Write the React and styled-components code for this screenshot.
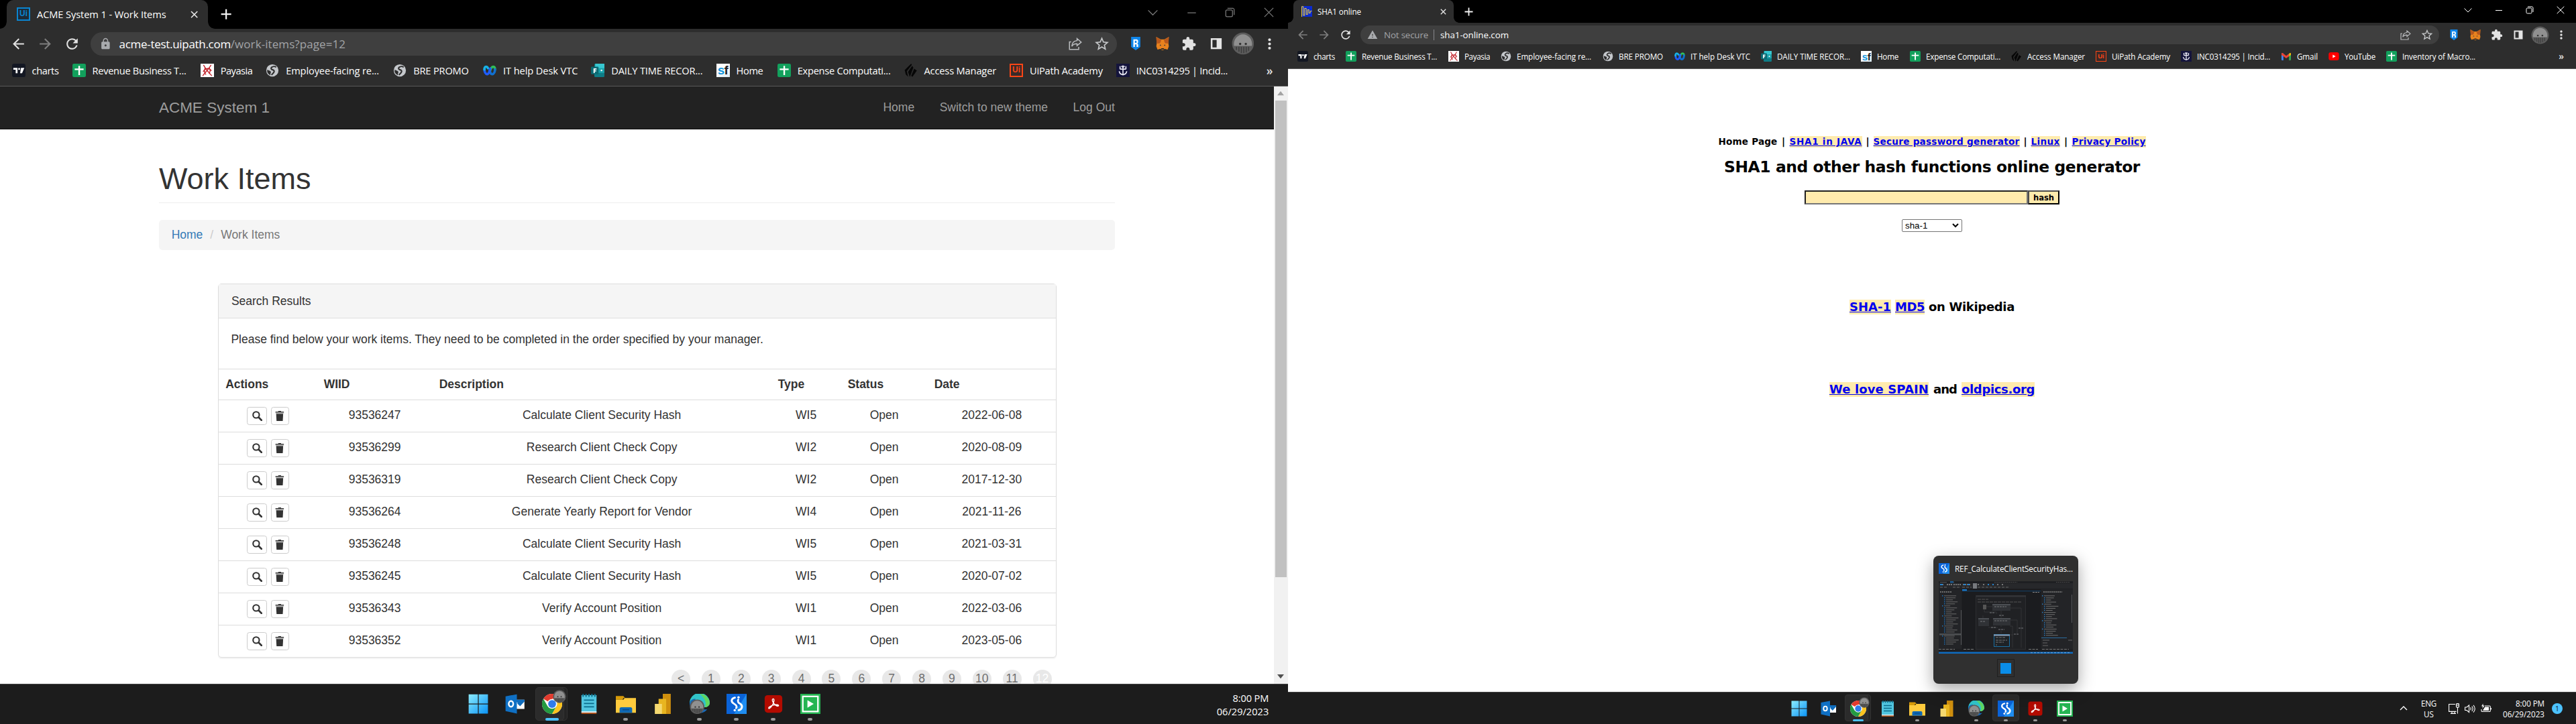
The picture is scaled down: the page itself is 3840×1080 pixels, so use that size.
import React from "react";
import styled, { createGlobalStyle } from "styled-components";
import {
  MdArrowBack, MdArrowForward, MdRefresh, MdLock, MdStarOutline,
  MdExtension, MdMoreVert, MdWarning,
} from "react-icons/md";

const UI = '"Open Sans", "Noto Sans", sans-serif';
const ARIAL = '"Liberation Sans", Arial, sans-serif';
const VERDANA = '"DejaVu Sans", Verdana, sans-serif';

const Global = createGlobalStyle`
  * { box-sizing: border-box; }
  body { margin: 0; background: #fff; overflow: hidden; }
  svg { display: block; flex: none; }
`;

/* ---------- text with a measured tracking ---------- */

const pen = document.createElement("canvas").getContext("2d");

function tracking(text, width, size, weight, font) {
  pen.font = `${weight} ${size}px ${font}`;
  return (width - pen.measureText(text).width) / text.length;
}

const LabelText = styled.span`
  display: block;
  flex: none;
  width: ${(p) => p.$w}px;
  font: ${(p) => p.$weight} ${(p) => p.$size}px ${(p) => p.$font};
  line-height: ${(p) => p.$line};
  color: ${(p) => p.$color};
  white-space: nowrap;
`;

const MarkText = styled(LabelText)`
  background: #ffebad;
  text-decoration: underline;
`;

function Label({ w, size = 11.7, weight = 400, font = UI, color = "#fff", line = "16px", marked, children }) {
  const Text = marked ? MarkText : LabelText;
  return (
    <Text
      $w={w} $size={size} $weight={weight} $font={font} $color={color} $line={line}
      style={{ letterSpacing: `${tracking(children, w, size, weight, font)}px` }}
    >
      {children}
    </Text>
  );
}

/* ---------- desktop ---------- */

const Desktop = styled.div`
  display: flex;
  width: 3840px;
  height: 1080px;
  overflow: hidden;
`;

const Screen = styled.section`
  position: relative;
  display: flex;
  flex-direction: column;
  flex: none;
  zoom: ${(p) => p.$scale};
  width: ${(p) => 1920 / p.$scale}px;
  height: ${(p) => 1080 / p.$scale}px;
  background: #fff;
  overflow: hidden;
`;

/* ---------- browser frame ---------- */

const TabStrip = styled.div`
  display: flex;
  height: 34px;
  flex: none;
  background: #000;
  padding-left: 8px;
`;

const Tab = styled.div`
  position: relative;
  display: flex;
  align-items: center;
  width: ${(p) => p.$w}px;
  height: 34px;
  padding: 0 9px 0 12px;
  gap: 8px;
  border-radius: 8px 8px 0 0;
  background: #2d2d2d;
  &::before, &::after {
    content: "";
    position: absolute;
    bottom: 0;
    width: 8px;
    height: 8px;
  }
  &::before { left: -8px; background: radial-gradient(circle at 0 0, transparent 7.5px, #2d2d2d 8px); }
  &::after { right: -8px; background: radial-gradient(circle at 100% 0, transparent 7.5px, #2d2d2d 8px); }
`;

const Push = styled.div` flex: 1; `;

const StripButton = styled.div`
  display: flex;
  align-items: center;
  justify-content: center;
  width: ${(p) => p.$w}px;
  height: ${(p) => p.$h}px;
`;

const Toolbar = styled.div`
  display: flex;
  flex: none;
  height: 32px;
  padding: 4px 6px 0;
  background: #2d2d2d;
`;

const ToolButton = styled.div`
  display: flex;
  align-items: center;
  justify-content: center;
  width: 32px;
  height: 28px;
  color: ${(p) => p.$color || "#e2e2e2"};
`;

const Omnibox = styled.div`
  display: flex;
  align-items: center;
  flex: 1;
  height: 28px;
  margin: 0 6px;
  padding: 0 2px 0 10px;
  border-radius: 14px;
  background: #3f3f3f;
  color: #a9abae;
`;

const SiteIcon = styled.div` width: ${(p) => p.$w}px; display: flex; align-items: center; `;
const Divider = styled.div` width: 1px; height: 16px; margin: 0 9px 0 8px; background: #87898c; `;

const Bookmarks = styled.div`
  display: flex;
  align-items: center;
  flex: none;
  height: 37px;
  padding: 0 ${(p) => p.$end}px 0 14px;
  background: #2d2d2d;
  border-bottom: 1px solid #5a5a5a;
`;

const Bookmark = styled.div`
  display: flex;
  align-items: center;
  gap: 8px;
  margin-right: 16px;
`;

const More = styled.div`
  margin-left: auto;
  font: 600 14px ${UI};
  line-height: 16px;
  color: #e0e0e0;
`;

const Tile = styled.span`
  display: flex;
  align-items: center;
  justify-content: center;
  flex: none;
  width: 16px;
  height: 16px;
  background: ${(p) => p.$bg};
  border: ${(p) => p.$border || "0"};
  color: ${(p) => p.$color};
  font: ${(p) => p.$font};
  line-height: 1;
  letter-spacing: ${(p) => p.$track || 0};
`;

const G = (props) => <svg width="16" height="16" viewBox="0 0 16 16" {...props} />;

const UiTile = ({ color, bg }) => (
  <Tile $bg={bg} $color={color} $border={`1.6px solid ${color}`} $font={`700 9.5px ${ARIAL}`}>Ui</Tile>
);
const Charts = () => (
  <G><rect width="16" height="16" rx="2.5" fill="#131722" />
    <path d="M1.5 5h5v6.3H4.3V7.2H1.5zM10.6 5h4l-2.7 6.3H9.6z" fill="#fff" /><circle cx="8.4" cy="6.2" r="1.2" fill="#fff" /></G>
);
const Sheets = () => (
  <G><rect width="16" height="16" rx="1.8" fill="#12a05c" />
    <path d="M7.1 2.5h1.9v3.2h4.3v1.9H9v6H7.1v-6H2.7V5.7h4.4z" fill="#fff" /></G>
);
const Payasia = () => (
  <G><rect width="16" height="16" fill="#fff" />
    <path d="M3.5 1.5c2 4 6 9 10 13M12.5 1.5C10 6 6 10 2.5 14.5M3 9.5c3-4.5 7-5 10-1M5.5 5c-1.5 3-1 6 1 8M10.5 5c1.5 3 1 5-.5 7" stroke="#c3252c" strokeWidth="1.1" fill="none" /></G>
);
const Globe = () => (
  <G><circle cx="8" cy="8" r="7.3" fill="#c4c7cb" />
    <path d="M12.6 4.2C11 3 8.600 3.200 7.200 4.300 5.600 5.600 7 7 8.300 7.300c1.700.4 2.300 1.500 1.500 2.900-.6 1.200-1.700 1.700-2.800 3.300" stroke="#2d2d2d" strokeWidth="1.7" fill="none" />
    <path d="M1.800 7.200l3.400 1.300c1.300.6 1.300 1.700.8 2.600-.4.800-.2 1.700-.3 2.600A6.300 6.300 0 0 1 1.800 7.200z" fill="#2d2d2d" /></G>
);
const Webex = () => (
  <G fill="none" strokeLinecap="round" strokeWidth="2.9">
    <path d="M8 10.200c.9-4 2.200-6.600 4.300-6.600 1.500 0 2.100 1.700 2 3.600" stroke="#2fbf5a" />
    <path d="M14.300 6.800c-.1 3-1.300 5.700-3.300 5.700-1.900 0-2.700-2.300-3.200-4.500" stroke="#1170cf" />
    <path d="M1.700 6.800c.1 3 1.300 5.700 3.300 5.700 2.400 0 2.900-4.300 3.700-6.700" stroke="#1e5cff" />
    <path d="M1.700 7c-.1-1.900.5-3.400 2-3.400 1 0 1.700.8 2.200 1.800" stroke="#17b2e6" />
  </G>
);
const Forms = () => (
  <G><rect x="4" width="12" height="16" rx="1.2" fill="#0e7c86" /><rect x="5" width="11" height="5.5" fill="#38c7d0" />
    <rect x="8" y="5.5" width="8" height="5.5" fill="#1ba3ac" /><rect y="3.6" width="9" height="9" rx="1" fill="#0b6a73" />
    <path d="M3 5.600h3.600v1.300H4.500v1h1.800v1.200H4.500v2H3z" fill="#fff" /><circle cx="12.5" cy="8" r="1" fill="#fff" /></G>
);
const SfF = styled.i` color: #222; font-style: normal; `;
const Sf = () => (
  <Tile $bg="linear-gradient(160deg,#fff 55%,#d9e8f2)" $color="#1496dd" $font={`700 15px ${ARIAL}`} $track="-0.5px">
    s<SfF>f</SfF>
  </Tile>
);
const Access = () => (
  <G fill="#060606"><path d="M8.200 0L9 1.300 3 9l1.500 6.500L1.800 12.800.5 7.600z" /><path d="M9.400 2.600L10.800 4.500 6.600 15.800 4.500 9.800z" /><path d="M11.800 6L15 8.200l-5.200 7.300-1.600-1z" /></G>
);
const Incident = () => (
  <G><rect width="16" height="16" fill="#14143c" />
    <path d="M8 2v12M4.500 3v3.500M11.500 3v3.500M6 2.800L8 4.500l2-1.700M4.500 6.500h7M3.500 9c.5 3 2.500 4 4.500 4s4-1 4.500-4" stroke="#e8e8f4" strokeWidth="1.3" fill="none" /></G>
);
const Gmail = () => (
  <G><path d="M1 3.500h2.800V14H2a1 1 0 0 1-1-1z" fill="#4285f4" /><path d="M12.200 3.500H15V13a1 1 0 0 1-1 1h-1.800z" fill="#34a853" />
    <path d="M12.200 4.500l1.300-1.400c.8-.5 1.500 0 1.500 1v2L12.200 8z" fill="#fbbc04" /><path d="M1 6.100v-2c0-1 .8-1.500 1.600-1L8 7.200l4.200-3.100V8L8 11 3.800 8z" fill="#ea4335" /></G>
);
const YouTube = () => (
  <G><rect x=".3" y="2" width="15.4" height="12" rx="3.2" fill="#f00" /><path d="M6.300 5.500v5l4.400-2.500z" fill="#fff" /></G>
);
const WaveIcon = () => (
  <G><rect width="16" height="16" fill="#0b2bd0" />
    <path d="M.5 16V.8h2.300V14h2V3.500h2.400V12.500h2V5.500h2V10.500h2V7.500h2.300" stroke="#f2cf3a" strokeWidth="1" fill="none" /></G>
);

const BOOKMARKS = [
  [Charts, "charts", 32, 32],
  [Sheets, "Revenue Business T...", 112, 113],
  [Payasia, "Payasia", 38, 38],
  [Globe, "Employee-facing re...", 111, 112],
  [Globe, "BRE PROMO", 66, 67],
  [Webex, "IT help Desk VTC", 89, 89],
  [Forms, "DAILY TIME RECOR...", 109, 109],
  [Sf, "Home", 32, 33],
  [Sheets, "Expense Computati...", 111, 111],
  [Access, "Access Manager", 86, 86],
  [() => <UiTile color="#fa4616" bg="#3a2a28" />, "UiPath Academy", 87, 87],
  [Incident, "INC0314295 | Incid...", 109, 109],
  [Gmail, "Gmail", 31, 31],
  [YouTube, "YouTube", 46, 46],
  [Sheets, "Inventory of Macro...", 109, 109],
];

const Share = () => (
  <G fill="none" stroke="currentColor" strokeWidth="1.2"><path d="M3 6H1v9h11v-3" /><path d="M10 2l5 4.300-5 4.200V8.200C7 8.200 5 9 3.800 11.300 4 7.500 6.200 4.800 10 4.500z" /></G>
);
const Shield = () => (
  <G><path d="M2.500 0h11v12L8 16l-5.500-4z" fill="#0f85e8" /><path d="M5.200 3h4.300l1.300 1.200v2.600L9.900 7.900l1 1.200V12H9V8.900H7V12H5.200zM7 4.600v2.600h2V4.600z" fill="#fff" fillRule="evenodd" /></G>
);
const Fox = () => (
  <G><path d="M.5 0l5.300 3h4.400l5.300-3-.5 8 .5 3.200-1.500 4-3.700-1L9 15.800H7l-1.300-1.600-3.700 1-1.500-4L1 8z" fill="#e8821e" />
    <path d="M.5 0l6 4L5 7.500 1 8zM15.500 0l-6 4L11 7.500l4 .5z" fill="#b8581c" /><path d="M5 9l1.500 1.300-1.800.3zM11 9l-1.500 1.300 1.800.3z" fill="#233447" /><path d="M6.500 13.500h3l.3 1.500H6.200z" fill="#222" /></G>
);
const Panel = () => (
  <G><path d="M1.500 1.500h13v13h-13zM3.500 3.500v9h5v-9z" fill="#e4e4e4" fillRule="evenodd" /></G>
);
const Avatar = ({ size = 27 }) => (
  <svg width={size} height={size} viewBox="0 0 28 28">
    <circle cx="14" cy="14" r="13.5" fill="#5c5c5c" /><path d="M3 17a11.200 12 0 1 1 22 0z" fill="#909090" />
    <circle cx="10.5" cy="14.5" r="1.4" fill="#333" /><circle cx="17.5" cy="14.5" r="1.4" fill="#333" />
    <path d="M6 18v4M9 18v6M12 18v8M15 18v8M18 18v7M21 18v5" stroke="#3c3c3c" strokeWidth="1.2" />
  </svg>
);

function WindowControls({ color }) {
  const s = { width: 12, height: 12, viewBox: "0 0 12 12", fill: "none", stroke: color, strokeWidth: 1 };
  return (
    <>
      <StripButton $w={46} $h={29}><svg {...s}><path d="M.5 3.500L6 9l5.500-5.500" /></svg></StripButton>
      <StripButton $w={46} $h={29}><svg {...s}><path d="M1 6.500h10" /></svg></StripButton>
      <StripButton $w={46} $h={29}><svg {...s}><rect x="1" y="3" width="8" height="8" rx="1.5" /><path d="M3 1h6.500A1.800 1.800 0 0 1 11 2.800V9" /></svg></StripButton>
      <StripButton $w={46} $h={29}><svg {...s}><path d="M.7.7l10.600 10.600M11.300.7L.7 11.300" /></svg></StripButton>
    </>
  );
}

function Browser({ tabWidth, favicon, title, titleWidth, controls, back, count, end, children }) {
  return (
    <>
      <TabStrip>
        <Tab $w={tabWidth}>
          {favicon}
          <Label w={titleWidth}>{title}</Label>
          <Push />
          <StripButton $w={14} $h={34}>
            <svg width="9" height="9" viewBox="0 0 9 9" stroke="#e8e8e8" strokeWidth="1.3"><path d="M.8.8l7.400 7.400M8.200.8L.8 8.200" /></svg>
          </StripButton>
        </Tab>
        <StripButton $w={44} $h={34}>
          <svg width="13" height="13" viewBox="0 0 13 13" stroke="#f2f2f2" strokeWidth="1.8"><path d="M6.500.5v12M.5 6.500h12" /></svg>
        </StripButton>
        <Push />
        <WindowControls color={controls} />
      </TabStrip>
      <Toolbar>
        <ToolButton $color={back}><MdArrowBack size={20} /></ToolButton>
        <ToolButton $color="#7e7e7e"><MdArrowForward size={20} /></ToolButton>
        <ToolButton><MdRefresh size={20} /></ToolButton>
        <Omnibox>
          {children}
          <Push />
          <ToolButton $color="#b9bbbe"><Share /></ToolButton>
          <ToolButton $color="#c6c8ca"><MdStarOutline size={20} /></ToolButton>
        </Omnibox>
        <ToolButton><Shield /></ToolButton>
        <ToolButton><Fox /></ToolButton>
        <ToolButton><MdExtension size={18} /></ToolButton>
        <ToolButton><Panel /></ToolButton>
        <ToolButton><Avatar /></ToolButton>
        <ToolButton><MdMoreVert size={20} /></ToolButton>
      </Toolbar>
      <Bookmarks $end={end}>
        {BOOKMARKS.slice(0, count).map(([Icon, text, w, box], i) => (
          <Bookmark key={i} style={{ width: box + 24 }}><Icon /><Label w={w}>{text}</Label></Bookmark>
        ))}
        <More>»</More>
      </Bookmarks>
    </>
  );
}

/* ---------- ACME page ---------- */

const Viewport = styled.div`
  display: flex;
  flex: 1;
  min-height: 0;
  overflow: hidden;
`;

const AcmePage = styled.main`
  flex: 1;
  display: flex;
  flex-direction: column;
  align-items: center;
  overflow: hidden;
  font: 14px/20px ${ARIAL};
  color: #333;
`;

const NavBar = styled.nav`
  display: flex;
  flex: none;
  align-items: center;
  justify-content: space-between;
  width: 100%;
  height: 51px;
  padding: 0 189.5px;
  background: #222;
  border-bottom: 1px solid #080808;
  color: #9d9d9d;
`;
const Brand = styled.div` font-size: 18px; `;
const NavLinks = styled.div` display: flex; gap: 30px; `;

const Container = styled.div` flex: none; width: 1140px; `;
const Heading = styled.h1`
  margin: 39.4px 0 20px;
  padding-bottom: 8.6px;
  border-bottom: 1px solid #eee;
  font: 36px/39.6px ${ARIAL};
`;
const Crumbs = styled.div`
  display: flex;
  height: 36px;
  padding: 8px 15px;
  border-radius: 4px;
  background: #f5f5f5;
  color: #777;
`;
const CrumbLink = styled.a` color: #337ab7; `;
const Slash = styled.span` padding: 0 8.8px; color: #ccc; `;

const PanelBox = styled.section`
  width: 1000px;
  margin: 40px auto 0 70.6px;
  border: 1px solid #ddd;
  border-radius: 4px;
  box-shadow: 0 1px 1px rgba(0, 0, 0, 0.05);
`;
const PanelHead = styled.header`
  height: 40.8px;
  padding: 10px 15px;
  background: #f5f5f5;
  border-bottom: 1px solid #ddd;
`;
const PanelText = styled.p` margin: 0; height: 60px; padding: 15px 14.6px; `;

const Row = styled.div`
  display: grid;
  grid-template-columns: 117.2px 137.6px 404px 83.2px 103.2px 1fr;
  height: ${(p) => (p.$head ? 36.8 : 38.4)}px;
  border-top: 1px solid #ddd;
  font-weight: ${(p) => (p.$head ? 700 : 400)};
  text-align: ${(p) => (p.$head ? "left" : "center")};
`;
const Cell = styled.div` padding: 7.8px 8px; `;
const Actions = styled.div`
  display: flex;
  justify-content: center;
  gap: 4.4px;
  padding-top: 7.8px;
`;
const IconButton = styled.button`
  display: flex;
  align-items: center;
  justify-content: center;
  width: ${(p) => p.$w}px;
  height: 21.8px;
  padding: 0;
  background: #fff;
  border: 1px solid #ccc;
  border-radius: 3px;
`;

const Pager = styled.div`
  display: flex;
  justify-content: flex-end;
  gap: 13.5px;
  width: 1000px;
  margin: 14.6px 0 0 70px;
  padding-right: 5.5px;
`;
const PageDot = styled.span`
  display: flex;
  justify-content: center;
  width: 22.4px;
  height: 22.4px;
  border-radius: 50%;
  background: #e8e8e8;
  color: ${(p) => (p.$on ? "#fff" : "#6f6f6f")};
  line-height: 22px;
  white-space: nowrap;
`;

const ScrollTrack = styled.div`
  display: flex;
  flex-direction: column;
  align-items: center;
  justify-content: space-between;
  width: 17px;
  background: #f1f1f1;
`;
const ScrollThumb = styled.div`
  width: 13.6px;
  height: 568.8px;
  margin-bottom: auto;
  background: #c1c1c1;
`;
const ScrollArrow = styled.div`
  display: flex;
  align-items: center;
  justify-content: center;
  width: 17px;
  height: 17px;
`;

const ITEMS = [
  ["93536247", "Calculate Client Security Hash", "WI5", "2022-06-08"],
  ["93536299", "Research Client Check Copy", "WI2", "2020-08-09"],
  ["93536319", "Research Client Check Copy", "WI2", "2017-12-30"],
  ["93536264", "Generate Yearly Report for Vendor", "WI4", "2021-11-26"],
  ["93536248", "Calculate Client Security Hash", "WI5", "2021-03-31"],
  ["93536245", "Calculate Client Security Hash", "WI5", "2020-07-02"],
  ["93536343", "Verify Account Position", "WI1", "2022-03-06"],
  ["93536352", "Verify Account Position", "WI1", "2023-05-06"],
];

const SearchGlyph = () => (
  <svg width="12" height="12" viewBox="0 0 12 12" fill="none" stroke="#333"><circle cx="4.7" cy="4.7" r="3.7" strokeWidth="1.7" /><path d="M7.600 7.600l3.400 3.400" strokeWidth="2.1" strokeLinecap="round" /></svg>
);
const TrashGlyph = () => (
  <svg width="11" height="12" viewBox="0 0 11 12" fill="#333"><path d="M3.800 0h3.400v.8H10.500v1.200H.5V.8h3.300z" /><path d="M.8 2.200h9.400v1H.8z" fill="#aaa" /><path d="M1.300 3.400h8.400L9.200 12H1.800z" /></svg>
);

function Acme() {
  return (
    <Viewport>
      <AcmePage>
        <NavBar>
          <Brand>ACME System 1</Brand>
          <NavLinks><span>Home</span><span>Switch to new theme</span><span>Log Out</span></NavLinks>
        </NavBar>
        <Container>
          <Heading>Work Items</Heading>
          <Crumbs><CrumbLink>Home</CrumbLink><Slash>/</Slash><span>Work Items</span></Crumbs>
          <PanelBox>
            <PanelHead>Search Results</PanelHead>
            <PanelText>Please find below your work items. They need to be completed in the order specified by your manager.</PanelText>
            <Row $head>
              {["Actions", "WIID", "Description", "Type", "Status", "Date"].map((h) => <Cell key={h}>{h}</Cell>)}
            </Row>
            {ITEMS.map(([id, text, type, date]) => (
              <Row key={id}>
                <Actions>
                  <IconButton $w={24}><SearchGlyph /></IconButton>
                  <IconButton $w={21.6}><TrashGlyph /></IconButton>
                </Actions>
                <Cell>{id}</Cell><Cell>{text}</Cell><Cell>{type}</Cell><Cell>Open</Cell><Cell>{date}</Cell>
              </Row>
            ))}
          </PanelBox>
          <Pager>
            {["<", 1, 2, 3, 4, 5, 6, 7, 8, 9, 10, 11, 12].map((n) => <PageDot key={n} $on={n === 12}>{n}</PageDot>)}
          </Pager>
        </Container>
      </AcmePage>
      <ScrollTrack>
        <ScrollArrow><svg width="8" height="5" viewBox="0 0 8 5"><path d="M0 5l4-5 4 5z" fill="#a3a3a3" /></svg></ScrollArrow>
        <ScrollThumb />
        <ScrollArrow><svg width="8" height="5" viewBox="0 0 8 5"><path d="M0 0l4 5 4-5z" fill="#505050" /></svg></ScrollArrow>
      </ScrollTrack>
    </Viewport>
  );
}

/* ---------- hash generator page ---------- */

const HashPage = styled.main`
  display: flex;
  flex: 1;
  flex-direction: column;
  align-items: center;
  padding-top: 100px;
`;
const Line = styled.div`
  display: flex;
  gap: ${(p) => p.$gap || 0}px;
  margin-top: ${(p) => p.$top || 0}px;
`;
const Bar = styled.span`
  width: ${(p) => p.$w || 18}px;
  text-align: center;
  font: 700 14px/17px ${VERDANA};
`;
const HashInput = styled.div`
  width: 333px;
  height: 21px;
  border: 2px solid;
  border-color: #202020 #767676 #767676 #202020;
  background: #ffebad;
`;
const HashButton = styled.div`
  display: flex;
  align-items: center;
  justify-content: center;
  width: 47px;
  height: 21px;
  border: 2px solid;
  border-color: #4c4c4c #000 #000 #4c4c4c;
  background: #ffebad;
`;
const Select = styled.div`
  display: flex;
  align-items: center;
  justify-content: space-between;
  width: 90px;
  height: 19px;
  margin-top: 22px;
  padding: 0 4px;
  border: 1px solid #767676;
  border-radius: 2px;
  font: 13.333px ${ARIAL};
  color: #000;
`;

const bold = { font: VERDANA, weight: 700, color: "#000" };
const link = { ...bold, marked: true, color: "#0000ee" };

function HashSite() {
  const nav = { size: 13.6, line: "17px" };
  const big = { size: 18, line: "22px" };
  return (
    <HashPage>
      <Line>
        <Label w={88} {...bold} {...nav}>Home Page</Label><Bar>|</Bar>
        <Label w={108} {...link} {...nav}>SHA1 in JAVA</Label><Bar $w={17}>|</Bar>
        <Label w={218} {...link} {...nav}>Secure password generator</Label><Bar $w={17}>|</Bar>
        <Label w={43} {...link} {...nav}>Linux</Label><Bar>|</Bar>
        <Label w={110} {...link} {...nav}>Privacy Policy</Label>
      </Line>
      <Line $top={15}><Label w={620} {...bold} size={23.4} line="28px">SHA1 and other hash functions online generator</Label></Line>
      <Line $top={21}>
        <HashInput />
        <HashButton><Label w={31} {...bold} size={11.6}>hash</Label></HashButton>
      </Line>
      <Select>
        sha-1
        <svg width="10" height="7" viewBox="0 0 10 7" fill="none" stroke="#000" strokeWidth="2"><path d="M1 1l4 4 4-4" /></svg>
      </Select>
      <Line $top={101} $gap={6}>
        <Label w={62} {...link} {...big}>SHA-1</Label>
        <Label w={44} {...link} {...big}>MD5</Label>
        <Label w={128} {...bold} {...big}>on Wikipedia</Label>
      </Line>
      <Line $top={101} $gap={7}>
        <Label w={148} {...link} {...big}>We love SPAIN</Label>
        <Label w={35} {...bold} {...big}>and</Label>
        <Label w={109} {...link} {...big}>oldpics.org</Label>
      </Line>
    </HashPage>
  );
}

/* ---------- taskbar ---------- */

const Taskbar = styled.footer`
  display: grid;
  grid-template-columns: 1fr auto 1fr;
  flex: none;
  height: 48px;
  background: #1c1c1c;
  border-top: 1px solid #454545;
`;
const Apps = styled.div` grid-column: 2; display: flex; `;
const AppSlot = styled.div`
  position: relative;
  display: flex;
  align-items: center;
  justify-content: center;
  width: 44px;
  height: 47px;
`;
const Plate = styled.div`
  position: absolute;
  top: 3px;
  left: ${(p) => p.$x}px;
  width: ${(p) => p.$w}px;
  height: 40px;
  border: 1px solid #333;
  border-radius: 4px;
  background: ${(p) => p.$bg || "#2b2b2b"};
`;
const Art = styled.div` position: relative; `;
const Badge = styled.div`
  position: absolute;
  left: ${(p) => p.$x}px;
  top: ${(p) => p.$y}px;
`;
const Dot = styled.div`
  position: absolute;
  bottom: 4px;
  left: calc(50% - ${(p) => (p.$on ? 8 : 3)}px);
  width: ${(p) => (p.$on ? 16 : 6)}px;
  height: 3px;
  border-radius: 2px;
  background: ${(p) => (p.$on ? "#4cc2ff" : "#9a9a9a")};
`;
const Tray = styled.div`
  grid-column: 3;
  justify-self: end;
  display: flex;
  align-items: center;
  padding-right: ${(p) => p.$right}px;
  color: #fff;
`;
const Clock = styled.div` display: flex; flex-direction: column; align-items: flex-end; `;
const Lang = styled.div` display: flex; flex-direction: column; align-items: center; margin: 0 18px 0 20px; `;
const Status = styled.div` display: flex; gap: 8px; margin-right: 17px; `;
const Notice = styled.div`
  width: 16px;
  height: 16px;
  margin-left: 11px;
  border-radius: 50%;
  background: #4cc2ff;
  color: #123;
  font: 11px/16px ${UI};
  text-align: center;
`;

const T = (props) => <svg width="24" height="24" viewBox="0 0 24 24" {...props} />;

const StartIcon = () => (
  <T><defs><linearGradient id="win" x1="0" y1="0" x2="1" y2="1"><stop offset="0" stopColor="#8cecff" /><stop offset="1" stopColor="#0a93f5" /></linearGradient></defs>
    <path d="M.5 .5h11v11H.5zM12.500 .5h11v11h-11zM.5 12.500h11v11H.5zM12.500 12.500h11v11h-11z" fill="url(#win)" /></T>
);
const OutlookIcon = () => (
  <T><path d="M13 7h10v11H13z" fill="#fff" /><path d="M13 7h10v1.500l-5.500 5L13 9z" fill="#0f6cbd" /><path d="M15 11l2.800 2.800L23 8" stroke="#0f6cbd" strokeWidth="1.5" fill="none" />
    <path d="M.5 3L14 .5v23L.5 20.500z" fill="#0f70c4" /><ellipse cx="7" cy="12" rx="2.7" ry="3.4" fill="none" stroke="#fff" strokeWidth="1.9" /></T>
);
const ChromeIcon = () => (
  <T><circle cx="12" cy="12" r="12" fill="#fff" />
    <path d="M12 12L1.600 6A12 12 0 0 1 22.400 6H12z" fill="#e33b2e" /><path d="M1.600 6A12 12 0 0 0 12 24l5.200-9L12 12 6.800 15z" fill="#249a41" />
    <path d="M22.400 6A12 12 0 0 1 12 24l5.200-9c1.300-2.500 1-6-1.200-9z" fill="#fcc31e" />
    <circle cx="12" cy="12" r="5.8" fill="#fff" /><circle cx="12" cy="12" r="4.7" fill="#2f7bea" /></T>
);
const NotepadIcon = () => (
  <T><rect x="3" y="1.5" width="18" height="21" fill="#52c6e0" /><path d="M3 21h18v1.500H3z" fill="#f2f2f2" /><path d="M3 22.500h18V24H3z" fill="#b0541d" />
    <path d="M5 0v3.500M8.500 0v3.500M12 0v3.500M15.500 0v3.500M19 0v3.500" stroke="#0d6f8c" strokeWidth="1.5" /><path d="M6 7.500h12M6 11.500h12M6 15.500h12" stroke="#0b6c8c" strokeWidth="1.4" /></T>
);
const FolderIcon = () => (
  <T><path d="M0 2.500h9l2 2.500h-2l-1 2H0z" fill="#d79a08" /><path d="M0 7h9l1.500-2H24v17.500H0z" fill="#ffcb3d" />
    <path d="M4.500 22.500V18a2 2 0 0 1 2-2h11a2 2 0 0 1 2 2v4.500z" fill="#0f69b4" /><path d="M8 19h8" stroke="#0a4a86" strokeWidth="1.2" /></T>
);
const PowerBiIcon = () => (
  <T><path d="M12 0h9.500v24H12z" fill="#cf8f0e" /><path d="M7 6h9v18H7z" fill="#e8b520" /><path d="M2.500 12H11v12H2.500z" fill="#f5d970" /></T>
);
const EdgeIcon = () => (
  <T><path d="M0 12A12 12 0 0 1 24 10c.3 4-3 6-6 6-2 0-3-1-3-2z" fill="#31c3c9" /><path d="M12 0a12 12 0 0 1 12 10.500c0 3.500-3 5.500-6 5.500 3-5 0-11-6-16z" fill="#5fd760" />
    <path d="M0 12c0-4 3-6 7-6-2 6 1 14 14 12.500A12 12 0 0 1 0 12z" fill="#1668b8" /></T>
);
const StudioIcon = ({ size = 24 }) => (
  <svg width={size} height={size} viewBox="0 0 24 24"><path d="M0 0h24v24H0z" fill="#0a63d8" /><path d="M24 0v24H9z" fill="#1f8df0" />
    <g fill="none" stroke="#fff" strokeWidth="2.3" strokeLinecap="round">
      <path d="M10 4.500C5.500 5.500 5 9.500 8.500 11.500c3 1.800 4.500 3.500 3 5.500" /><path d="M14 7c-1.300 2 .2 3.600 2.500 5 3.200 2.300 2.300 6.500-2 7.500" />
    </g>
    <circle cx="14.3" cy="4.2" r="1.4" fill="#fff" /><circle cx="9.8" cy="19.6" r="1.4" fill="#fff" /></svg>
);
const AcrobatIcon = () => (
  <T><rect x="1.5" y="1.5" width="21" height="21" rx="3.5" fill="#b30b00" />
    <path d="M11.500 6c1.500-.5 1.500 3 0 6s-4 6-5 5.500 1-3 5-4 7-.5 6.500.7-4-.2-6-3.200S10.500 6.300 11.500 6z" fill="none" stroke="#fff" strokeWidth="1.2" /></T>
);
const RobotIcon = () => (
  <T><path d="M0 0h24v24H0z" fill="#25b552" /><path d="M3 3h18v18H3z" fill="none" stroke="#fff" strokeWidth="1.8" /><path d="M8.500 7.500v9l7.500-4.500z" fill="#fff" /></T>
);

function AppRow({ active }) {
  return (
    <Apps>
      <AppSlot><StartIcon /></AppSlot>
      <AppSlot><OutlookIcon /></AppSlot>
      <AppSlot>
        <Plate $x={7} $w={34} $bg="#242424" /><Plate $x={2} $w={35} />
        <Art><ChromeIcon /><Badge $x={13} $y={-5}><Avatar size={16} /></Badge></Art><Dot $on />
      </AppSlot>
      <AppSlot><NotepadIcon /></AppSlot>
      <AppSlot><FolderIcon /><Dot /></AppSlot>
      <AppSlot><PowerBiIcon /></AppSlot>
      <AppSlot><Art><EdgeIcon /><Badge $x={0} $y={6}><Avatar size={18} /></Badge></Art><Dot /></AppSlot>
      <AppSlot>{active && <Plate $x={2} $w={40} />}<Art><StudioIcon /></Art><Dot /></AppSlot>
      <AppSlot><AcrobatIcon /><Dot /></AppSlot>
      <AppSlot><RobotIcon /><Dot /></AppSlot>
    </Apps>
  );
}

const Time = () => (
  <Clock><Label w={43}>8:00 PM</Label><Label w={62}>06/29/2023</Label></Clock>
);

/* ---------- window preview ---------- */

const Preview = styled.aside`
  position: absolute;
  left: 962px;
  top: 829px;
  display: flex;
  flex-direction: column;
  align-items: center;
  width: 216px;
  height: 191px;
  padding: 11px 8px 0;
  border-radius: 8px;
  background: #303030;
  box-shadow: 0 8px 24px rgba(0, 0, 0, 0.35);
`;
const PreviewTitle = styled.div` display: flex; gap: 8px; width: 200px; height: 27px; `;
const PreviewTool = styled.div`
  display: flex;
  align-items: center;
  justify-content: center;
  width: 26px;
  height: 27px;
  margin-top: 8px;
  border: 1px solid #1f1f1f;
`;
const Stop = styled.div` width: 16px; height: 16px; background: #0a8de8; `;

const wobble = (i) => ((i * 7919) % 97) / 97;

function Thumbnail() {
  const left = Array.from({ length: 25 }, (_, i) => (
    <g key={i}>
      <rect x={i % 5 ? 8 : 5} y={21 + i * 3} width="1.5" height="1.5" fill="#1f6fb5" />
      <rect x={i % 5 ? 11 : 8} y={21.3 + i * 3} width={8 + wobble(i + 3) * 11} height="1" fill="#6a6a6a" />
    </g>
  ));
  const right = Array.from({ length: 20 }, (_, i) => (
    <g key={i}>
      <rect x={154 + (i % 4 ? 3 : 0)} y={21 + i * 3.1} width="1.5" height="1.5" fill="#2a78b8" />
      <rect x={157 + (i % 4 ? 3 : 0)} y={21.3 + i * 3.1} width={7 + wobble(i + 9) * 12} height="1" fill="#6e6e6e" />
    </g>
  ));
  return (
    <svg width="200" height="108" viewBox="0 0 200 108">
      <rect width="200" height="108" fill="#1e1f22" />
      <path d="M2 1.500h10M22 1.500h1" stroke="#555" /><rect x="17" width="5" height="2.5" fill="#1a5c94" />
      <path d="M83 1.500h34M175 1.500h20" stroke="#4a4a4a" strokeDasharray="2 1" />
      <rect y="3" width="200" height="8" fill="#27282b" />
      <path d="M2 5h6M12 5h8M22 5h11M36 5h12M58 5h3M66 5h3M73 5h3M80 5h3M87 5h3M94 5h3" stroke="#777" strokeWidth="2.2" strokeDasharray="2 1" />
      <path d="M2 5h4M37 5h3M43 5h3M73 5h2M80 5h2" stroke="#2383cf" strokeWidth="2" />
      <rect x="51" y="3" width="6" height="8" fill="#77797d" />
      <path d="M2 9h12M21 9h10M35 9h14M58 9h46" stroke="#666" strokeDasharray="4 2" />
      <rect y="12" width="34" height="89" fill="#232427" /><rect x="153" y="12" width="47" height="89" fill="#232427" />
      {left}{right}
      <path d="M2 16h17M156 16h28" stroke="#888" strokeWidth="1.5" strokeDasharray="2 1" />
      <rect x="1" y="78" width="33" height="2.5" fill="#4e5053" /><rect x="33" y="43" width="1" height="52" fill="#55575a" />
      <rect x="198" y="20" width="1" height="42" fill="#55575a" />
      <rect x="35" y="12" width="117" height="90" fill="#1b1c1f" />
      <rect x="35" y="12" width="7" height="2.5" fill="#1a78c8" /><path d="M35 14.700h117" stroke="#174d7c" strokeWidth=".8" />
      <path d="M140 16.500h10" stroke="#8a8a8a" strokeDasharray="3 1" />
      <rect x="55.5" y="21.5" width="74" height="80" fill="#202124" stroke="#2d2e31" />
      <rect x="56" y="21" width="74" height="2.5" fill="#333438" />
      <path d="M58 27h16M58 31h66" stroke="#555" strokeDasharray="5 1" />
      <g stroke="#3c3d40" strokeWidth=".7" fill="none">
        <path d="M68 38h12M68 42v4h18v3M66 51v4M93 44v24M93 74v4M107 40h16v59M104 58h13v20M106 67h4v32M74 69h14M99 80h12" />
      </g>
      <g fill="#303236"><rect x="80" y="34" width="27" height="10" /><rect x="66" y="35" width="5" height="7" fill="#555" />
        <rect x="59" y="55" width="16" height="12" /><rect x="81" y="55" width="26" height="11" /></g>
      <path d="M80 35h27M59 56h16M81 56h26" stroke="#4c4f54" strokeWidth="2" />
      <path d="M83 38h18M83 59h20M62 60h8M76 47h7M90 51h7M78 69h7M89 72h9M119 70h8M112 79h8" stroke="#77797c" strokeDasharray="3 1" />
      <rect x="82.5" y="79.5" width="23" height="18" fill="#1e2226" stroke="#1b84c4" strokeWidth=".8" /><path d="M82 80.500h24" stroke="#8ea0b8" strokeWidth="2" />
      <path d="M85 84h15M85 88h17M85 91h12M85 95h2" stroke="#777" strokeDasharray="4 1" />
      <path d="M0 101.500h24M37 101.500h16M134 101.500h14M154 101.500h40" stroke="#777" strokeDasharray="4 1.5" />
      <path d="M153 84.500h38" stroke="#2b6ca0" /><path d="M155 88h10M155 92h7M155 96h8M193 88h6" stroke="#777" strokeWidth=".8" />
      <rect y="105.5" width="200" height="2.5" fill="#0f6cc0" /><path d="M137 106.700h58" stroke="#9cc4ea" strokeWidth=".7" strokeDasharray="3 2" />
    </svg>
  );
}

/* ---------- app ---------- */

export default function App() {
  return (
    <Desktop>
      <Global />
      <Screen $scale={1.25}>
        <Browser
          tabWidth={240} title="ACME System 1 - Work Items" titleWidth={154} controls="#7a7a7a" back="#e2e2e2" count={12} end={18}
          favicon={<UiTile color="#0a85d1" bg="#1d2c38" />}
        >
          <SiteIcon $w={24}><MdLock size={15} /></SiteIcon>
          <Label w={133} size={13.6} line="20px">acme-test.uipath.com</Label>
          <Label w={137} size={13.6} line="20px" color="#a2a4a7">/work-items?page=12</Label>
        </Browser>
        <Acme />
        <Taskbar>
          <AppRow />
          <Tray $right={23}><Time /></Tray>
        </Taskbar>
      </Screen>
      <Screen $scale={1}>
        <Browser
          tabWidth={239} title="SHA1 online" titleWidth={65} controls="#fff" back="#7e7e7e" count={15} end={18}
          favicon={<WaveIcon />}
        >
          <SiteIcon $w={25}><MdWarning size={16} /></SiteIcon>
          <Label w={66} size={13.4} line="20px" color="#a2a4a7">Not secure</Label>
          <Divider />
          <Label w={102} size={13.4} line="20px">sha1-online.com</Label>
        </Browser>
        <HashSite />
        <Taskbar>
          <AppRow active />
          <Tray $right={20}>
            <svg width="12" height="7" viewBox="0 0 12 7" fill="none" stroke="#fff" strokeWidth="1.4"><path d="M1 6l5-5 5 5" /></svg>
            <Lang><Label w={23}>ENG</Label><Label w={15}>US</Label></Lang>
            <Status>
              <G fill="none" stroke="#fff" strokeWidth="1.1"><path d="M10 1.500H.6v10.900h11M5 12.400v3M9 12.400v3M3 15.400h8" /><rect x="11.5" y=".6" width="4" height="5.5" rx="1" /><path d="M11.500 3h4M13.500 6v9.400" /></G>
              <G fill="none" stroke="#fff" strokeWidth="1.1"><path d="M.6 6v4.500h2.500l3.500 3V3L3.100 6z" /><path d="M8.700 6.200c.8 1.300.8 2.800 0 4.100M10.800 4.500c1.800 2.300 1.800 5 0 7.500M13 2.800c2.800 3.300 2.800 7.500 0 10.800" /></G>
              <G fill="none" stroke="#fff" strokeWidth="1.1"><path d="M6 4h7a1.300 1.300 0 0 1 1.300 1.300v5.900a1.300 1.300 0 0 1-1.300 1.300H2.300A1.300 1.300 0 0 1 1 11.200V9M15.500 7v2.500" /><path d="M6.500 6h5v4.500H4z" fill="#fff" /><path d="M3.500.5L1 4.500h2L2.500 8 5.500 3.500h-2z" fill="#fff" stroke="none" /></G>
            </Status>
            <Time />
            <Notice>1</Notice>
          </Tray>
        </Taskbar>
        <Preview>
          <PreviewTitle><StudioIcon size={16} /><Label w={176}>REF_CalculateClientSecurityHas...</Label></PreviewTitle>
          <Thumbnail />
          <PreviewTool><Stop /></PreviewTool>
        </Preview>
      </Screen>
    </Desktop>
  );
}
